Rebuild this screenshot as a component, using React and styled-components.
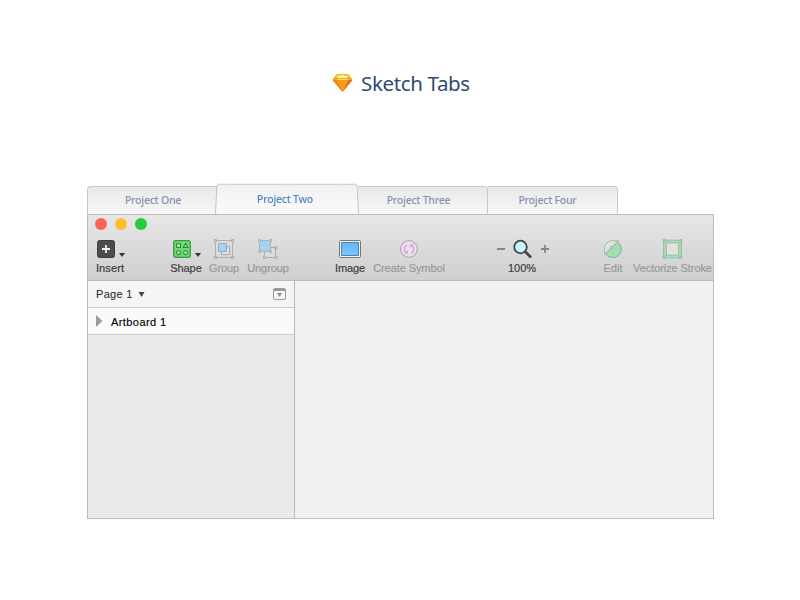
import React from 'react';
import styled, { createGlobalStyle } from 'styled-components';

const GlobalStyle = createGlobalStyle`
  * {
    box-sizing: border-box;
  }

  body {
    margin: 0;
    background: #fff;
    font-family: "Noto Sans", sans-serif;
  }
`;

const Page = styled.div`
  width: 800px;
  height: 600px;
  padding: 68px 86px 0 87px;
  overflow: hidden;
`;

const Title = styled.h1`
  display: flex;
  align-items: center;
  gap: 8px;
  height: 30px;
  margin: 0 0 85px 245px;
  color: #2f4a73;
  font-size: 20.5px;
  font-weight: 400;
  line-height: 30px;
  letter-spacing: -0.35px;
  white-space: nowrap;
`;

const TabBar = styled.div`
  display: flex;
  align-items: flex-end;
  height: 31px;
`;

const Tab = styled.div`
  flex: none;
  width: 130px;
  height: 28px;
  padding: 0 ${ props => props.$padRight || 0 }px 0 ${ props => ( props.$first ? 2 : 0 ) }px;
  border: 1px solid #c8c8c8;
  border-bottom: 0;
  border-left-width: ${ props => ( props.$first ? 1 : 0 ) }px;
  border-radius: ${ props => ( props.$first ? '4px 0 0 0' : '0 4px 0 0' ) };
  background: linear-gradient(#e9e9e9, #f7f7f7);
  color: #8592ad;
  font-size: 10.5px;
  font-weight: 500;
  line-height: 26px;
  letter-spacing: -0.22px;
  text-align: center;
  white-space: nowrap;
`;

const ActiveTab = styled.div`
  position: relative;
  z-index: 1;
  flex: none;
  width: 144px;
  height: 31px;
  margin: 0 -1px 0 -2px;
  padding: 1px 4px 0 0;
  color: #4f82c4;
  font-size: 10.5px;
  font-weight: 500;
  line-height: 31px;
  letter-spacing: -0.22px;
  text-align: center;

  &::before {
    content: '';
    position: absolute;
    z-index: -1;
    inset: 0;
    border: 1px solid #c6c6c6;
    border-bottom: 0;
    border-radius: 4px 4px 0 0;
    background: linear-gradient(#f1f1f1, #fafafa);
    transform: perspective(105px) rotateX(4deg);
    transform-origin: bottom;
  }
`;

const Window = styled.div`
  display: flex;
  flex-direction: column;
  width: 627px;
  height: 305px;
  border: 1px solid #bdbdbd;
  background: #f1f1f1;
  font-family: "Liberation Sans", Arial, sans-serif;
`;

const Toolbar = styled.div`
  height: 66px;
  padding-top: 3px;
  border-bottom: 1px solid #bababa;
  background: linear-gradient(#e7e7e7, #d0cfd0);
`;

const Lights = styled.div`
  display: flex;
  gap: 8px;
  padding-left: 7px;
  margin-bottom: 9px;
`;

const Light = styled.span`
  width: 12px;
  height: 12px;
  border-radius: 50%;
  background: ${ props => props.$color };
`;

const Tools = styled.div`
  display: flex;
`;

const Tool = styled.div`
  display: flex;
  flex: none;
  flex-direction: column;
  align-items: center;
  gap: 3px;
  width: ${ props => props.$width }px;
  margin-left: ${ props => props.$gap }px;
  color: ${ props => ( props.$disabled ? '#999' : '#404040' ) };
  font-size: 11px;
  line-height: 12px;
  letter-spacing: ${ props => props.$tracking || 0 }px;
  white-space: nowrap;
  -webkit-text-stroke: 0.2px currentColor;

  svg {
    display: block;
    overflow: visible;
  }
`;

const Content = styled.div`
  display: flex;
  flex: 1;
`;

const Sidebar = styled.div`
  width: 207px;
  border-right: 1px solid #b9b9b9;
  background: #eaeaea;
`;

const PageRow = styled.div`
  display: flex;
  align-items: center;
  height: 27px;
  padding: 0 8px;
  border-bottom: 1px solid #cdcdcd;
  background: #f5f5f5;
  color: #222;
  font-size: 11px;
  letter-spacing: 0.3px;

  svg:first-of-type {
    margin-left: 5px;
  }

  svg:last-of-type {
    margin-left: auto;
  }
`;

const ArtboardRow = styled.div`
  display: flex;
  align-items: center;
  gap: 8px;
  height: 27px;
  padding: 1px 8px 0;
  border-bottom: 1px solid #cdcdcd;
  background: #fafafa;
  color: #000;
  font-size: 11px;
  letter-spacing: 0.42px;
  -webkit-text-stroke: 0.15px #000;

  svg {
    margin-top: -2px;
  }
`;

const Diamond = () => (
  <svg width="21" height="20" viewBox="0 0 21 20">
    <path d="M4.5 1.3 10.5.8l6 .5L20.5 7l-10 12L.5 7z" fill="#f6a51b" />
    <path d="M4.5 1.3 10.5.8 5 7H.5z" fill="#f8bd34" />
    <path d="m10.5.8 6 .5 4 5.7H16z" fill="#f8bd34" />
    <path d="M10.5.8 5 7h11z" fill="#fde36b" />
    <path d="M5 2.7h11L14.5 6h-8z" fill="#fff2a4" />
    <path d="M.5 7H5l5.5 12z" fill="#ec851a" />
    <path d="M20.5 7H16l-5.5 12z" fill="#df7418" />
    <path d="M5 7h11l-5.5 12z" fill="#f59a1b" />
    <path d="m1 6.8 2-1.2h15l2 1.2" fill="none" stroke="#e9921a" strokeWidth=".8" />
  </svg>
);

const InsertIcon = () => (
  <svg width="28" height="20">
    <rect x="1.5" y="1.5" width="17" height="17" rx="2" fill="#4c4c4c" stroke="#3d3d3d" />
    <path d="M10 6v8M6 10h8" stroke="#f2f2f2" strokeWidth="1.8" />
    <path d="M23 14h6l-3 4z" fill="#333" />
  </svg>
);

const ShapeIcon = () => (
  <svg width="32" height="20">
    <rect x="3.7" y="1.7" width="16.6" height="16.6" rx="2" fill="#66dd6d" stroke="#43954a" strokeWidth="1.3" />
    <g fill="#c5f1c7" stroke="#347d3a" strokeWidth="1.1">
      <path d="M6.7 4.8h3.7v3.7H6.7zM15.6 4.4l2.2 4.1h-4.4z" />
      <circle cx="8.5" cy="13.7" r="1.9" />
      <circle cx="15.6" cy="13.7" r="1.9" />
    </g>
    <path d="M25 14h6l-3 4z" fill="#333" />
  </svg>
);

const GroupIcon = () => (
  <svg width="30" height="20">
    <path d="M6.5 1.5h17v17h-17z" fill="none" stroke="#b0b0b0" />
    <path d="M12.5 7.5h8v8h-8z" fill="#e2e2e2" stroke="#aaa" />
    <path d="M9.5 4.5h8v8h-8z" fill="#a9d0ed" stroke="#94afc3" />
    <path d="M5.5.5h2v2h-2zM22.5.5h2v2h-2zM5.5 17.5h2v2h-2zM22.5 17.5h2v2h-2z" fill="#ddd" stroke="#aaa" />
  </svg>
);

const UngroupIcon = () => (
  <svg width="42" height="20">
    <path d="M17.5 8.5h11v10h-11z" fill="#ddd" stroke="#aaa" />
    <path d="M12.5 1.5h11v11h-11z" fill="#a9d0ed" stroke="#9fb9cb" />
    <path d="M11.5.5h2v2h-2zM22.5.5h2v2h-2zM11.5 11.5h2v2h-2zM22.5 11.5h2v2h-2zM28 7.5h2v2h-2zM16.5 17.5h2v2h-2zM28 17.5h2v2h-2z" fill="#ddd" stroke="#aaa" strokeWidth=".9" />
  </svg>
);

const ImageIcon = () => (
  <svg width="30" height="20">
    <defs>
      <linearGradient id="sky" x2="0" y2="1">
        <stop stopColor="#64b4f5" />
        <stop offset="1" stopColor="#7bc8ff" />
      </linearGradient>
    </defs>
    <rect x="4.5" y="1.5" width="21" height="17" rx="1" fill="#f5f5f5" stroke="#777" />
    <path d="M6.5 3.5h17v13h-17z" fill="url(#sky)" stroke="#4d83af" />
  </svg>
);

const SymbolIcon = () => (
  <svg width="72" height="20">
    <circle cx="36" cy="10" r="8.4" fill="#eadfeb" stroke="#b7abb9" strokeWidth="1.2" />
    <path d="M33.5 5.8c-2.8 2-2.8 6-.3 8M38.5 14.2c2.8-2 2.8-6 .3-8" fill="none" stroke="#dba5e2" strokeWidth="1.6" />
    <path d="M31 14.8h4v-4zM41 5.2h-4v4z" fill="#dba5e2" />
  </svg>
);

const ZoomIcon = () => (
  <svg width="54" height="20">
    <path d="M2 10h8M46 10h8M50 6v8" stroke="#868686" strokeWidth="1.8" />
    <path d="m30 12.5 5.3 5.2" stroke="#404040" strokeWidth="2.6" strokeLinecap="round" />
    <circle cx="25.5" cy="8" r="6.3" fill="#c8f4fb" stroke="#454545" strokeWidth="1.8" />
  </svg>
);

const EditIcon = () => (
  <svg width="20" height="20">
    <circle cx="9.8" cy="10" r="8.5" fill="#dfe3df" stroke="#9bbfa3" />
    <path d="M14.3 2.8A8.5 8.5 0 1 1 2.6 14.5z" fill="#a1dfad" stroke="#8cba96" />
    <path d="M2.6 14.5 14.3 2.8" stroke="#aaa" />
    <path d="M1.5 13.5h2v2h-2zM7.5 7.5h2v2h-2zM13.3 1.6h2v2h-2z" fill="#e4e4e4" stroke="#aaa" strokeWidth=".9" />
  </svg>
);

const VectorizeIcon = () => (
  <svg width="79" height="20">
    <path d="M32 2.5h15v15H32z" fill="#e1e1e1" stroke="#8eb698" strokeWidth="3.6" />
    <path d="M32 2.5h15v15H32z" fill="none" stroke="#a6dfb0" strokeWidth="1.8" />
    <path d="M30.2.7h2v2h-2zM46.8.7h2v2h-2zM30.2 17.3h2v2h-2zM46.8 17.3h2v2h-2z" fill="#ddd" stroke="#a4a4a4" strokeWidth=".9" />
  </svg>
);

const tools = [
  { label: 'Insert', width: 28, gap: 8, icon: <InsertIcon />, tracking: 0.1 },
  { label: 'Shape', width: 32, gap: 46, icon: <ShapeIcon />, tracking: -0.08 },
  { label: 'Group', width: 30, gap: 7, icon: <GroupIcon />, disabled: true, tracking: -0.1 },
  { label: 'Ungroup', width: 42, gap: 8, icon: <UngroupIcon />, disabled: true, tracking: -0.1 },
  { label: 'Image', width: 30, gap: 46, icon: <ImageIcon />, tracking: -0.08 },
  { label: 'Create Symbol', width: 72, gap: 8, icon: <SymbolIcon />, disabled: true, tracking: -0.08 },
  { label: '100%', width: 54, gap: 50, icon: <ZoomIcon /> },
  { label: 'Edit', width: 20, gap: 54, icon: <EditIcon />, disabled: true },
  { label: 'Vectorize Stroke', width: 79, gap: 10, icon: <VectorizeIcon />, disabled: true, tracking: -0.08 },
];

const App = () => (
  <Page>
    <GlobalStyle />
    <Title>
      <Diamond />
      Sketch Tabs
    </Title>
    <TabBar>
      <Tab $first>Project One</Tab>
      <ActiveTab>Project Two</ActiveTab>
      <Tab $padRight={8}>Project Three</Tab>
      <Tab $padRight={10}>Project Four</Tab>
    </TabBar>
    <Window>
      <Toolbar>
        <Lights>
          <Light $color="#ff6058" />
          <Light $color="#ffbd2f" />
          <Light $color="#28ca41" />
        </Lights>
        <Tools>
          {tools.map( tool => (
            <Tool
              key={tool.label}
              $width={tool.width}
              $gap={tool.gap}
              $disabled={tool.disabled}
              $tracking={tool.tracking}
            >
              {tool.icon}
              <span>{tool.label}</span>
            </Tool>
          ))}
        </Tools>
      </Toolbar>
      <Content>
        <Sidebar>
          <PageRow>
            Page 1
            <svg width="7" height="5"><path d="M.5 0h6l-3 5z" fill="#444" /></svg>
            <svg width="13" height="12">
              <rect x=".5" y=".5" width="12" height="11" rx="1.5" fill="#f5f5f5" stroke="#999" />
              <path d="M1 2h11" stroke="#999" strokeWidth="2" />
              <path d="M4 5h5L6.5 9z" fill="#888" />
            </svg>
          </PageRow>
          <ArtboardRow>
            <svg width="7" height="12"><path d="M0 0v12l6.5-6z" fill="#9c9c9c" /></svg>
            Artboard 1
          </ArtboardRow>
        </Sidebar>
      </Content>
    </Window>
  </Page>
);

export default App;
